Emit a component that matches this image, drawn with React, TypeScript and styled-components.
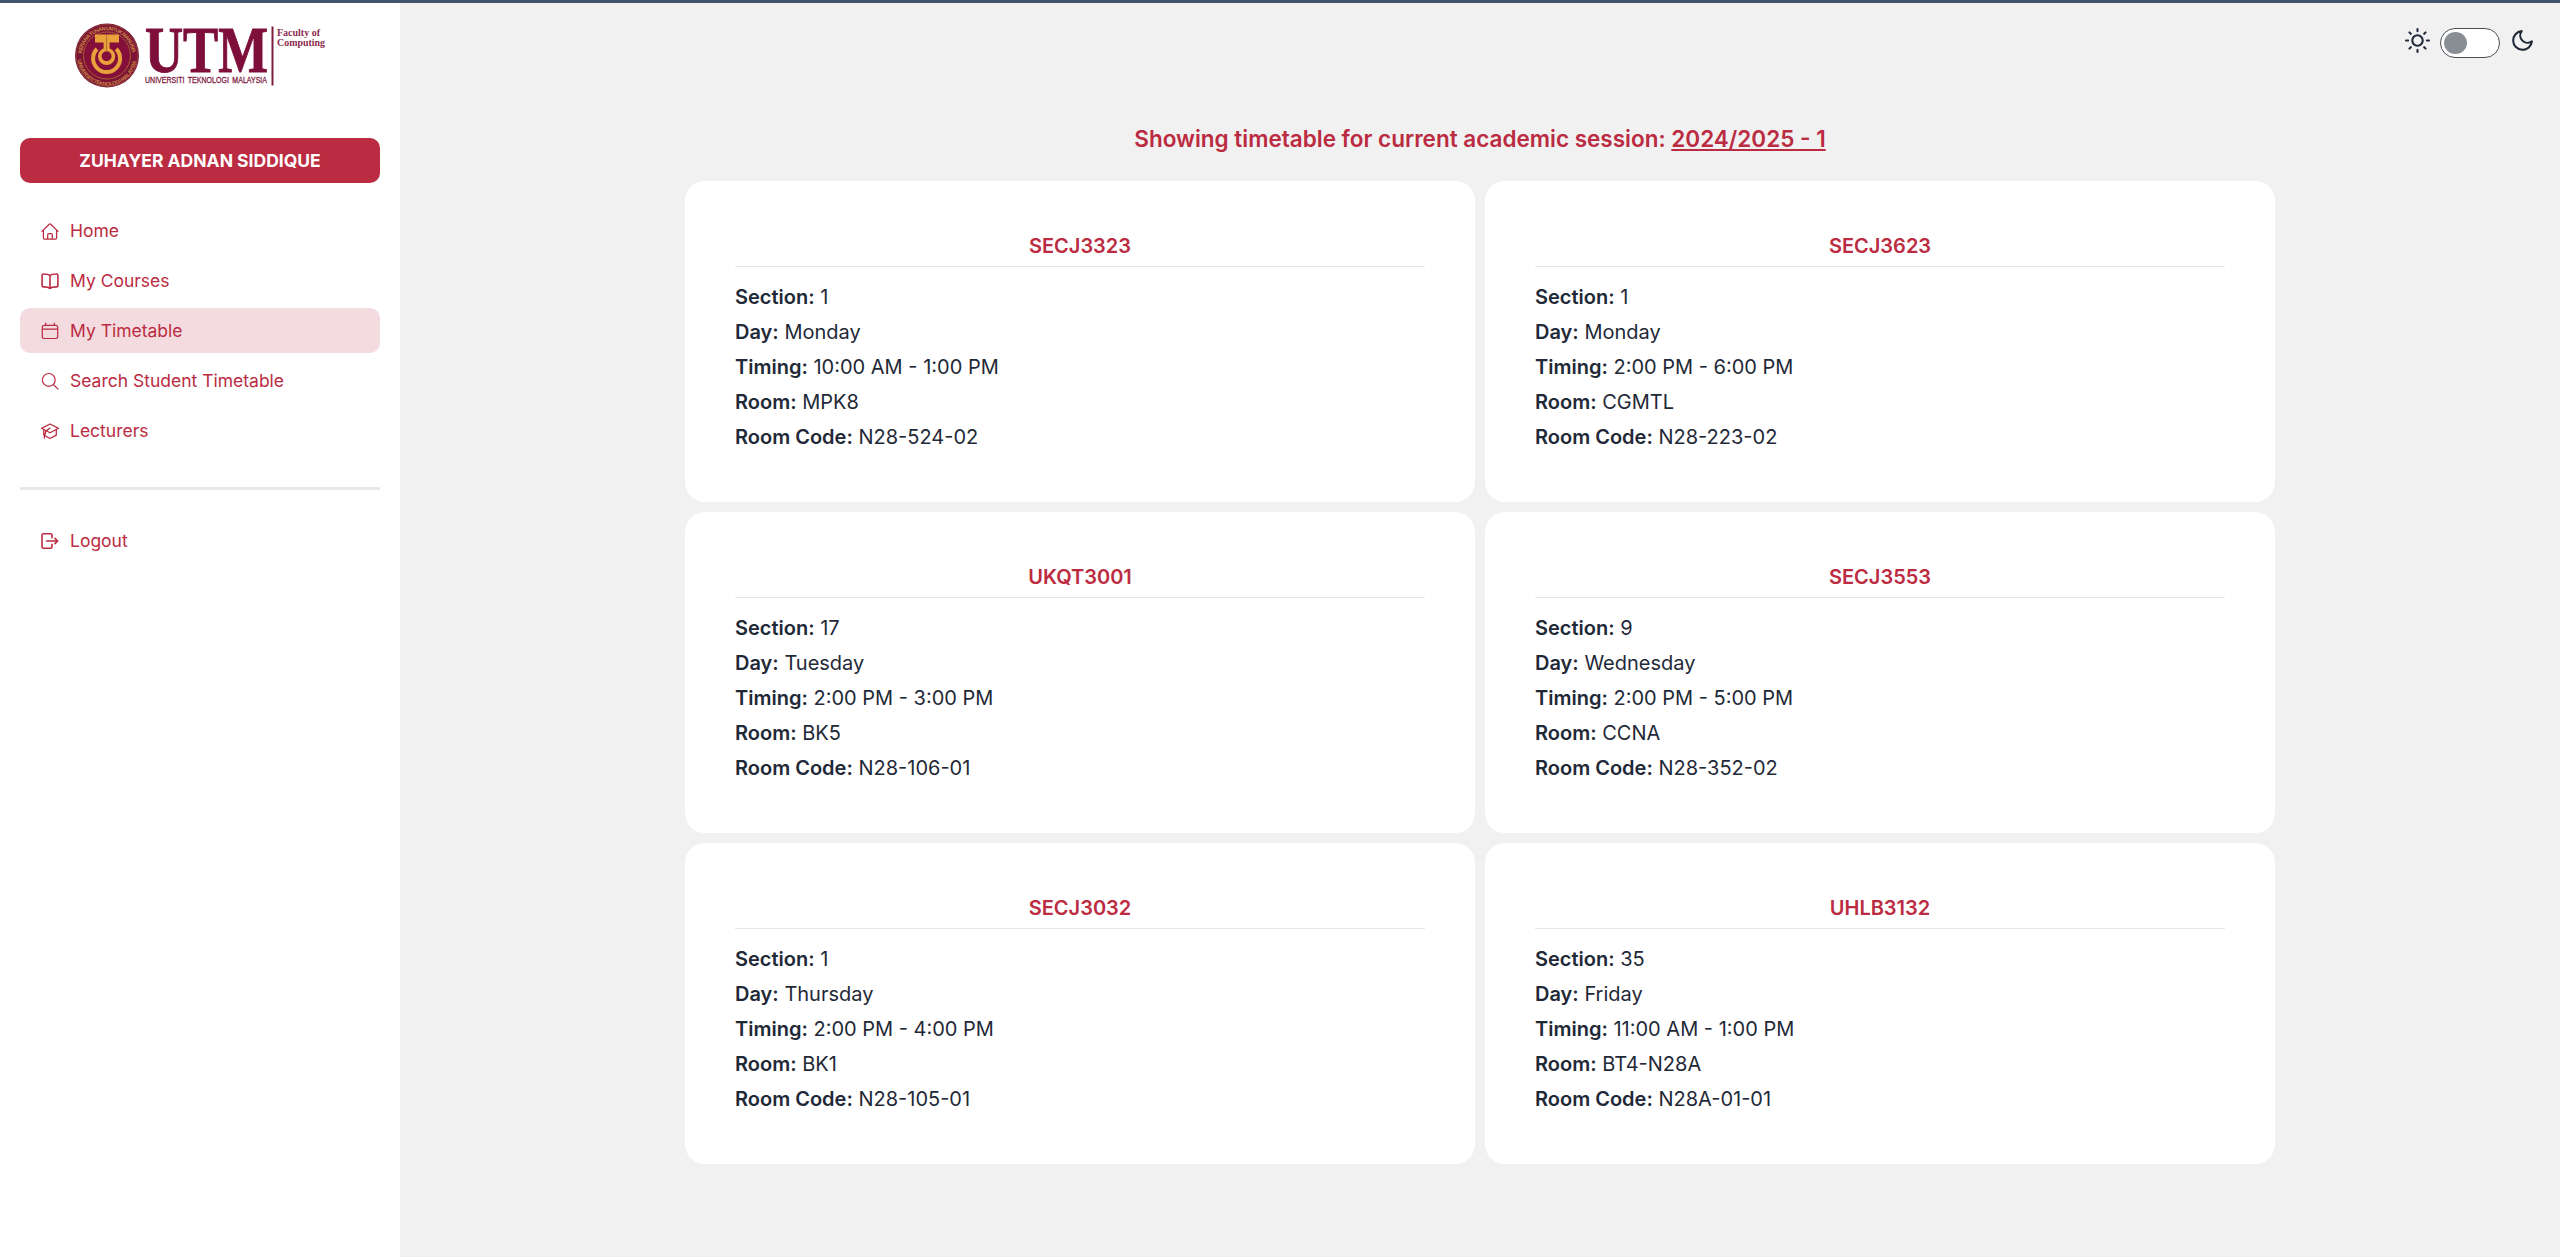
import React from "react";
import styled, { createGlobalStyle, css } from "styled-components";

const Global = createGlobalStyle`
  * { box-sizing: border-box; }
  body { margin: 0; background: #f1f1f1; color: #1f2937; font-family: Inter, "Liberation Sans", sans-serif; font-size: 20px; }
  h1, h2, p { margin: 0; }
`;

const Page = styled.div`
  display: flex;
  height: 1257px;
  border-top: 3px solid #42546c;
  overflow: hidden;
`;

const Sidebar = styled.aside`
  width: 400px;
  flex: none;
  background: #fff;
  padding: 0 20px;
  display: flex;
  flex-direction: column;
`;

const LogoRow = styled.div`
  padding: 17px 0 0 54px;
  height: 135px;
  svg { display: block; overflow: visible; }
`;

const NameBadge = styled.div`
  height: 45px;
  border-radius: 10px;
  background: #bb2b41;
  color: #fff;
  font-size: 17.5px;
  font-weight: 700;
  display: flex;
  align-items: center;
  justify-content: center;
  margin-bottom: 25px;
`;

const Nav = styled.nav`
  display: flex;
  flex-direction: column;
  gap: 5px;
`;

const NavItem = styled.a<{ $active?: boolean }>`
  height: 45px;
  padding: 0 20px;
  border-radius: 10px;
  display: flex;
  align-items: center;
  gap: 10px;
  color: #bb2b41;
  font-size: 17.5px;
  ${(p) => p.$active && css`background: #f3dbdf;`}
  svg { flex: none; }
`;

const Rule = styled.div`
  height: 3px;
  background: #e8e8e8;
  margin: 34px 0 28px;
`;

const Main = styled.main`
  flex: 1;
  background: #f1f1f1;
  display: flex;
  flex-direction: column;
`;

const TopBar = styled.header`
  height: 105px;
  padding: 25px 25px 0 0;
  display: flex;
  justify-content: flex-end;
  align-items: flex-start;
  gap: 10px;
  color: #1f2937;
  svg { display: block; }
`;

const Switch = styled.div`
  width: 60px;
  height: 30px;
  padding: 3px;
  border: 1px solid #4b4f57;
  border-radius: 15px;
  background: #fff;
`;

const Knob = styled.div`
  width: 23px;
  height: 22px;
  border-radius: 50%;
  background: #898e95;
`;

const Heading = styled.h1`
  font-size: 22.5px;
  line-height: 35px;
  font-weight: 600;
  color: #bb2b41;
  text-align: center;
  height: 73px;
  padding-top: 13px;
`;

const Session = styled.span`
  text-decoration: underline;
`;

const Grid = styled.section`
  width: 1590px;
  margin: 0 auto;
  display: grid;
  grid-template-columns: 1fr 1fr;
  gap: 10px;
`;

const Card = styled.article`
  height: 321px;
  padding: 50px;
  border-radius: 20px;
  background: #fff;
`;

const Code = styled.h2`
  height: 36px;
  line-height: 30px;
  border-bottom: 1px solid #e5e6e6;
  font-size: 20px;
  font-weight: 600;
  color: #bb2b41;
  text-align: center;
  margin-bottom: 13px;
`;

const Row = styled.p`
  line-height: 35px;
  b { font-weight: 600; }
`;

const Logo = () => (
  <svg width="256" height="72" viewBox="0 0 256 72">
    <circle cx="33" cy="35.5" r="32" fill="#7d1436" />
    <circle cx="33" cy="35.5" r="31" fill="none" stroke="#8d4a38" strokeWidth=".8" />
    <circle cx="33" cy="35.5" r="23.5" fill="#850f3b" stroke="#a65d35" strokeWidth="1" />
    <defs>
      <path id="ringTop" d="M7.800 35.500a25.200 25.200 0 0 1 50.400 0" />
      <path id="ringBottom" d="M3.300 36a29.700 29.700 0 0 0 59.400 0" />
    </defs>
    <g fontFamily="Liberation Sans, sans-serif" fontWeight="700" fontSize="5.4" fill="#c98644">
      <text textLength="74"><textPath href="#ringTop" startOffset="2">KERANA TUHAN UNTUK MANUSIA</textPath></text>
      <text textLength="84"><textPath href="#ringBottom" startOffset="4">UNIVERSITI TEKNOLOGI MALAYSIA</textPath></text>
    </g>
    <g fill="none" stroke="#e9a23b">
      <circle cx="32.6" cy="36.300" r="6.800" strokeWidth="3.600" />
      <path strokeWidth="4" d="M23 29a13.500 13.500 0 1 0 19.200 0" />
    </g>
    <path fill="#e9a23b" d="M21 14.500h24v8H21zM29.600 22h6v9h-6z" />
    <path d="M32.600 14.500v16" stroke="#a65d35" strokeWidth=".8" />
    <text x="71" y="52" fontFamily="Liberation Serif, serif" fontWeight="700" fontSize="66" fill="#7d0f3a" stroke="#7d0f3a" strokeWidth="1" textLength="123" lengthAdjust="spacingAndGlyphs">UTM</text>
    <text x="71" y="62.8" fontFamily="Liberation Sans, sans-serif" fontSize="9" fill="#7d1c42" stroke="#7d1c42" strokeWidth=".3" textLength="122" lengthAdjust="spacingAndGlyphs" wordSpacing="2">UNIVERSITI TEKNOLOGI MALAYSIA</text>
    <path d="M198.500 6.500v59" stroke="#7d1c42" strokeWidth="2" />
    <g fontFamily="Liberation Serif, serif" fontWeight="700" fontSize="10" fill="#8d2b4e">
      <text x="203" y="16" textLength="43" lengthAdjust="spacingAndGlyphs">Faculty of</text>
      <text x="203" y="25.5" textLength="48" lengthAdjust="spacingAndGlyphs">Computing</text>
    </g>
  </svg>
);

const paths: Record<string, React.ReactNode> = {
  home: <path strokeWidth="1.250" d="m1 9.400 7.200-7.100a1.200 1.200 0 0 1 1.600 0L17 9.400M2.400 8.200v7.600c0 .8.5 1.300 1.300 1.300h10.600c.8 0 1.300-.5 1.300-1.300V8.200M6.700 17.100v-4.300c0-.7.4-1.100 1.100-1.100h2.400c.7 0 1.100.4 1.100 1.100v4.300" />,
  book: <path strokeWidth="1.600" d="M9 3.500C7.600 2.300 5.600 2 2.500 2 1.600 2 1.100 2.400 1.100 3.300v10.400c0 .8.5 1.200 1.400 1.200 2.700 0 5 .2 6.500 1.600 1.500-1.400 3.800-1.600 6.500-1.600.9 0 1.400-.4 1.400-1.200V3.300c0-.9-.5-1.300-1.400-1.300C12.400 2 10.400 2.300 9 3.500zM9 3.500v13" />,
  calendar: <path d="M3.200 3.300h11.600q1.900 0 1.900 1.900v9.400q0 1.900-1.900 1.900H3.200q-1.900 0-1.900-1.900V5.200q0-1.900 1.900-1.900zM1.300 7.200h15.400M4.700 1v2.500M13.300 1v2.500" />,
  search: <path d="M14.200 7.900a6.400 6.400 0 1 1-12.800 0 6.400 6.400 0 0 1 12.800 0zM12.400 12.500l4.600 4.700" />,
  cap: <path strokeWidth="1.300" d="m9 2 8.500 4.300L9 10.800.5 6.300zM2.800 7.800v5.400M15.300 7.800v5.300L9 16.500l-4-2.200M9 6.300 4.800 8.900 3.300 16" />,
  logout: <path strokeWidth="1.600" d="M11 5.800V3.300c0-1-.5-1.500-1.500-1.500h-7C1.500 1.800 1 2.300 1 3.300v11.400c0 1 .5 1.500 1.500 1.500h7c1 0 1.500-.5 1.500-1.500v-2.500M5.500 9h11M14 6.400 16.700 9 14 11.600" />,
};

const Icon = ({ name }: { name: string }) => (
  <svg width="20" height="20" viewBox="-1 -1 20 20" fill="none" stroke="currentColor" strokeWidth="1.200" strokeLinecap="round" strokeLinejoin="round">
    {paths[name]}
  </svg>
);

const SunIcon = () => (
  <svg width="25" height="25" viewBox="0 0 24 24" fill="none" stroke="currentColor" strokeWidth="2" strokeLinecap="round" strokeLinejoin="round">
    <circle cx="12" cy="12" r="5" />
    <path d="M12 1v2M12 21v2M4.200 4.200l1.400 1.400M18.400 18.400l1.400 1.400M1 12h2M21 12h2M4.200 19.800l1.400-1.400M18.400 5.600l1.400-1.400" />
  </svg>
);

const MoonIcon = () => (
  <svg width="25" height="25" viewBox="0 0 24 24" fill="none" stroke="currentColor" strokeWidth="2" strokeLinecap="round" strokeLinejoin="round">
    <path d="M21 12.790A9 9 0 1 1 11.210 3 7 7 0 0 0 21 12.790z" />
  </svg>
);

const links = [
  { icon: "home", label: "Home" },
  { icon: "book", label: "My Courses" },
  { icon: "calendar", label: "My Timetable", active: true },
  { icon: "search", label: "Search Student Timetable" },
  { icon: "cap", label: "Lecturers" },
];

const courses = [
  ["SECJ3323", "1", "Monday", "10:00 AM - 1:00 PM", "MPK8", "N28-524-02"],
  ["SECJ3623", "1", "Monday", "2:00 PM - 6:00 PM", "CGMTL", "N28-223-02"],
  ["UKQT3001", "17", "Tuesday", "2:00 PM - 3:00 PM", "BK5", "N28-106-01"],
  ["SECJ3553", "9", "Wednesday", "2:00 PM - 5:00 PM", "CCNA", "N28-352-02"],
  ["SECJ3032", "1", "Thursday", "2:00 PM - 4:00 PM", "BK1", "N28-105-01"],
  ["UHLB3132", "35", "Friday", "11:00 AM - 1:00 PM", "BT4-N28A", "N28A-01-01"],
];

const fields = ["Section:", "Day:", "Timing:", "Room:", "Room Code:"];

export default function App() {
  return (
    <Page>
      <Global />
      <Sidebar>
        <LogoRow><Logo /></LogoRow>
        <NameBadge>ZUHAYER ADNAN SIDDIQUE</NameBadge>
        <Nav>
          {links.map((l) => (
            <NavItem key={l.label} $active={l.active}><Icon name={l.icon} />{l.label}</NavItem>
          ))}
        </Nav>
        <Rule />
        <Nav>
          <NavItem><Icon name="logout" />Logout</NavItem>
        </Nav>
      </Sidebar>
      <Main>
        <TopBar><SunIcon /><Switch><Knob /></Switch><MoonIcon /></TopBar>
        <Heading>Showing timetable for current academic session: <Session>2024/2025 - 1</Session></Heading>
        <Grid>
          {courses.map(([code, ...values]) => (
            <Card key={code}>
              <Code>{code}</Code>
              {values.map((v, i) => (
                <Row key={fields[i]}><b>{fields[i]}</b> {v}</Row>
              ))}
            </Card>
          ))}
        </Grid>
      </Main>
    </Page>
  );
}
